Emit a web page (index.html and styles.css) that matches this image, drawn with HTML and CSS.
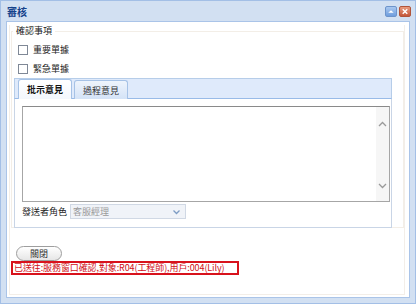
FILE: index.html
```html
<!DOCTYPE html>
<html lang="zh-Hant">
<head>
    <meta charset="UTF-8">
    <title>審核</title>
    <link rel="stylesheet" href="styles.css">
</head>
<body>
    <div class="window">
        <div class="titlebar">
            <span class="title">審核</span>
            <div class="tools">
                <span class="tool tool-restore">
                    <svg width="11" height="11" viewBox="0 0 11 11"><path d="M2.5 7 L5.5 4 L8.5 7 Z" fill="#fff"/></svg>
                </span>
                <span class="tool tool-close">
                    <svg width="11" height="11" viewBox="0 0 11 11"><path d="M3 3 L8 8 M8 3 L3 8" stroke="#fff" stroke-width="1.6"/></svg>
                </span>
            </div>
        </div>
        <div class="wbody">
            <div class="frame">
                <fieldset class="confirm">
                    <legend>確認事項</legend>
                    <label class="check-row"><span class="box"></span>重要單據</label>
                    <label class="check-row"><span class="box"></span>緊急單據</label>

                    <div class="tabpanel">
                        <div class="tabstrip">
                            <span class="tab active">批示意見</span>
                            <span class="tab">過程意見</span>
                        </div>
                        <div class="tabbody">
                            <div class="textarea">
                                <div class="scroll">
                                    <svg width="9" height="6" viewBox="0 0 9 6"><path d="M1 5 L4.5 1.5 L8 5" fill="none" stroke="#9a9a9a" stroke-width="1.3"/></svg>
                                    <svg width="9" height="6" viewBox="0 0 9 6"><path d="M1 1 L4.5 4.5 L8 1" fill="none" stroke="#9a9a9a" stroke-width="1.3"/></svg>
                                </div>
                            </div>
                            <div class="role-row">
                                <span class="role-label">發送者角色</span>
                                <div class="combo">
                                    <span class="combo-text">客服經理</span>
                                    <svg width="9" height="6" viewBox="0 0 9 6"><path d="M1.5 1.5 L4.5 4.5 L7.5 1.5" fill="none" stroke="#7d9cc4" stroke-width="1.3"/></svg>
                                </div>
                            </div>
                        </div>
                    </div>
                </fieldset>

                <button class="close-btn">關閉</button>
                <div class="notice">已送往:服務窗口確認,對象:R04(工程師),用戶:004(Lily)</div>
            </div>
        </div>
    </div>
</body>
</html>
```

FILE: styles.css
```css
* { box-sizing: border-box; }
body {
    margin: 0;
    font-family: "Noto Sans CJK TC", "Liberation Sans", sans-serif;
    font-size: 9px;
    color: #222;
}
.window {
    width: 416px;
    height: 304px;
    display: flex;
    flex-direction: column;
    background: #d2e0f2;
    border: 1px solid #a3bfe6;
    padding: 0 5px 5px 5px;
}
.titlebar {
    height: 20px;
    display: flex;
    align-items: center;
    justify-content: space-between;
    padding-left: 1px;
}
.title {
    font-weight: bold;
    font-size: 10px;
    color: #15428b;
}
.tools {
    display: flex;
    gap: 2px;
    margin-right: -1px;
}
.tool {
    width: 12px;
    height: 11px;
    border-radius: 2px;
    display: flex;
    align-items: center;
    justify-content: center;
}
.tool-restore { background: linear-gradient(#a9c8f0, #6f9ddd); border: 1px solid #6d94cb; }
.tool-close { background: linear-gradient(#e99b7e, #c4573a); border: 1px solid #b0543a; }
.wbody {
    flex: 1;
    background: #fff;
    border: 1px solid #aac4e8;
    padding: 0 4px 5px 2px;
}
.frame {
    height: 100%;
    border: 1px solid #f3eee8;
    border-top: none;
    padding: 0 0 0 1px;
}
.confirm {
    margin: 3px 0 0 0;
    padding: 0 11px 0 2px;
    border: 1px solid #f3eee7;
    height: 203px;
}
.confirm legend {
    padding: 0 3px;
    margin-left: -1px;
    font-size: 9px;
    line-height: 12px;
}
.check-row {
    display: flex;
    align-items: center;
    height: 19px;
    padding-left: 4px;
    margin-top: 0;
}
.check-row:first-of-type { margin-top: 3px; }
.box {
    width: 10px;
    height: 10px;
    border: 1px solid #7f8896;
    background: #fff;
    margin-right: 5px;
}
.tabpanel {
    margin-top: 0;
    height: 150px;
    display: flex;
    flex-direction: column;
}
.tabstrip {
    height: 21px;
    background: #dfeafb;
    border: 1px solid #b6cde9;
    border-bottom: 1px solid #99bbe8;
    display: flex;
    align-items: flex-end;
    gap: 2px;
    padding-left: 3px;
}
.tab {
    height: 19px;
    width: 54px;
    display: flex;
    align-items: center;
    justify-content: center;
    border: 1px solid #a6c2e6;
    border-bottom: none;
    border-radius: 3px 3px 0 0;
    background: linear-gradient(#eef4fc, #d4e3f7);
    color: #333;
    margin-bottom: -1px;
}
.tab.active {
    background: linear-gradient(#fff, #f3f7fd);
    font-weight: bold;
    color: #111;
    height: 20px;
}
.tabbody {
    flex: 1;
    border: 1px solid #c9d5e6;
    border-top: none;
    padding: 7px 1px 0 7px;
}
.textarea {
    height: 96px;
    border: 1px solid #a6a6a6;
    border-top-color: #8a8a8a;
    display: flex;
    justify-content: flex-end;
}
.scroll {
    width: 13px;
    background: #f6f6f6;
    display: flex;
    flex-direction: column;
    justify-content: space-between;
    align-items: center;
    padding: 14px 0 12px 0;
}
.role-row {
    display: flex;
    align-items: center;
    margin-top: 2px;
    height: 15px;
}
.role-label {
    width: 48px;
}
.combo {
    width: 116px;
    height: 15px;
    background: #f0f3f8;
    border: 1px solid #d0d8e4;
    display: flex;
    align-items: center;
    justify-content: space-between;
    padding: 0 4px 0 2px;
}
.combo-text { color: #9a9a9a; }
.close-btn {
    display: block;
    margin: 18px 0 0 5px;
    width: 46px;
    height: 15px;
    padding: 0;
    font-family: inherit;
    font-size: 9px;
    color: #333;
    border: 1px solid #9e9e9e;
    border-radius: 8px;
    background: linear-gradient(#ffffff, #e6e6e6);
}
.notice {
    width: 228px;
    height: 14px;
    border: 2px solid #d8121c;
    color: #d01018;
    line-height: 10px;
    padding-left: 1px;
    white-space: nowrap;
    letter-spacing: -0.1px;
}
```
